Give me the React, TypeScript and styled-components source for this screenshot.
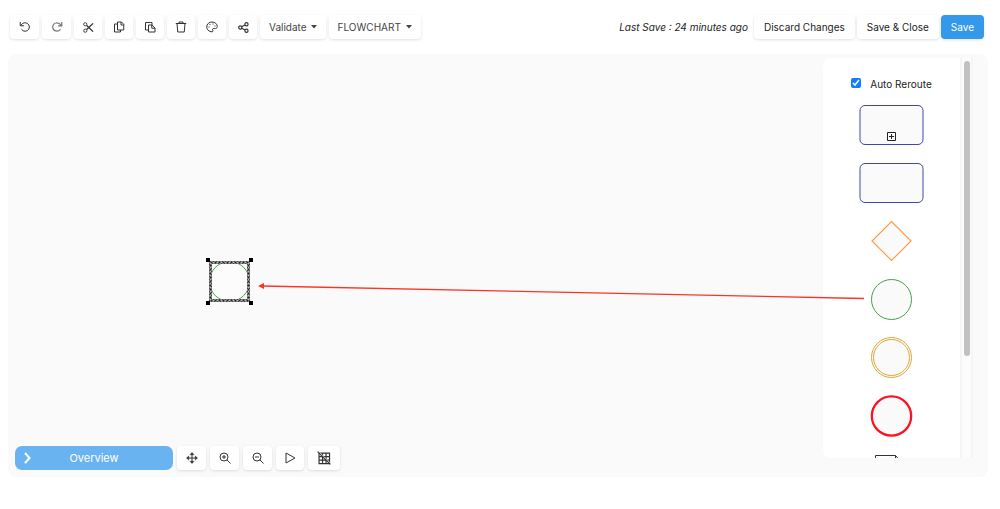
import React from "react";
import styled, { createGlobalStyle } from "styled-components";

const GlobalStyle = createGlobalStyle`
  * { box-sizing: border-box; }
  body {
    margin: 0;
    background: #fff;
    color: #222;
    font-family: Inter, "Liberation Sans", sans-serif;
    font-size: 10px;
    line-height: 16px;
  }
  svg { display: block; }
`;

const Page = styled.div`
  padding: 0 12px 32px 8px;
`;

const Header = styled.header`
  display: flex;
  align-items: center;
  justify-content: space-between;
  padding: 15px 4px 15px 2px;
`;

const Group = styled.div<{ $gap?: number }>`
  display: flex;
  align-items: center;
  gap: ${(p) => p.$gap ?? 3}px;
`;

const Button = styled.button<{ $primary?: boolean }>`
  display: flex;
  align-items: center;
  gap: 4px;
  height: 24px;
  padding: 0 10px;
  border: 0;
  border-radius: 4px;
  background: ${(p) => (p.$primary ? "#3498eb" : "#fff")};
  color: ${(p) => (p.$primary ? "#fff" : "#222")};
  box-shadow: 0 1px 3px rgba(0, 0, 0, 0.12);
  font: inherit;
  white-space: nowrap;
`;

const MenuButton = styled(Button)<{ $gap?: number }>`
  color: #444;
  padding: 0 9px;
  gap: ${(p) => p.$gap ?? 4}px;
`;

const IconButton = styled(Button)<{ $width?: number; $muted?: boolean }>`
  justify-content: center;
  width: ${(p) => p.$width ?? 28}px;
  padding: 0;
  color: ${(p) => (p.$muted ? "#777" : "#333")};
`;

const LastSave = styled.span`
  margin-right: 4px;
  font-style: italic;
`;

const Canvas = styled.main`
  position: relative;
  display: flex;
  justify-content: space-between;
  padding: 4px 15px 7px 7px;
  border-radius: 8px;
  background: #fafafa;
`;

const CanvasTools = styled(Group)`
  align-self: flex-end;
`;

const OverviewButton = styled.button`
  display: grid;
  grid-template-columns: 12px 1fr 12px;
  align-items: center;
  width: 158px;
  height: 24px;
  padding: 0 6px;
  border: 0;
  border-radius: 7px;
  background: #69b3f1;
  color: #fff;
  font: inherit;
  font-size: 11px;
`;

const Panel = styled.aside`
  display: flex;
  height: 400px;
  margin-bottom: 12px;
  border-radius: 8px 0 0 8px;
  overflow: hidden;
  background: #fff;
`;

const Shapes = styled.div`
  display: flex;
  flex-direction: column;
  align-items: center;
  gap: 18px;
  width: 137px;
  padding-top: 19px;
  & > * { flex-shrink: 0; }
`;

const Reroute = styled.label`
  display: flex;
  align-items: center;
  gap: 9px;
  height: 10px;
  padding-top: 4px;
`;

const Checkbox = styled.input`
  width: 10px;
  height: 10px;
  margin: 0 0 3px;
  accent-color: #147aff;
`;

const Track = styled.div`
  width: 13px;
  padding: 3px 0 0 2px;
  border: solid #f5f5f5;
  border-width: 0 2px;
  background: #fcfcfc;
`;

const Thumb = styled.div`
  width: 6px;
  height: 295px;
  border-radius: 3px;
  background: #c1c1c1;
`;

const Node = styled.svg`
  position: absolute;
  left: 198px;
  top: 204px;
`;

const ConnectorLayer = styled.div`
  position: absolute;
  left: 250px;
  right: 124px;
  top: 226px;
  height: 24px;
  pointer-events: none;
`;

type IconProps = { children: React.ReactNode; size?: number; stroke?: number };
const Icon = ({ children, size = 12, stroke = 2 }: IconProps) => (
  <svg width={size} height={size} viewBox="0 0 24 24" fill="none" stroke="currentColor" strokeWidth={stroke} aria-hidden="true">
    {children}
  </svg>
);

const Caret = () => (
  <svg width="6" height="4" viewBox="0 0 6 4" fill="currentColor" aria-hidden="true">
    <path d="M0 0h6L3 3.5z" />
  </svg>
);

const editTools = [
  { label: "Undo", width: 29, icon: <path d="M2.500 2v7.500H10M3.500 9C6 5 9 3.500 12.500 3.500a8.500 8.500 0 1 1-7.500 13" /> },
  { label: "Redo", width: 29, muted: true, icon: <path d="M21.500 2v7.500H14M20.500 9C18 5 15 3.500 11.500 3.500a8.500 8.500 0 1 0 7.500 13" strokeWidth="2.500" /> },
  { label: "Cut", size: 11, icon: <><circle cx="5" cy="5" r="3.500" /><circle cx="5" cy="19" r="3.500" /><path d="M8 7.500 22 21M8 16.500 22 3" strokeWidth="3" /></> },
  { label: "Copy", icon: <><path d="M9 2h8l4.500 4.500V18H9z" /><path d="M9 6H3v16h12v-4M16 2v6h5" /></> },
  { label: "Paste", icon: <><path d="M9 8h7l6 6v8H9z" /><path d="M9 18H3V3h4M13 3h3v5M6.500 3h7" /><path d="M15.500 8v6.500H22" /></> },
  { label: "Delete", icon: <path d="M1.500 5h21M4 5l1.500 17h13L20 5M8 5V2h8v3" /> },
  { label: "Theme", icon: <><path d="M10 21.500C4 20 1.500 16 1.500 12 1.500 6 6 2 12 2s10.500 4 10.500 9c0 4-3 4.500-6 4-3-.5-4 1-3 3s0 4.500-3.500 3.500z" /><path d="M5 12h2M7 7h2M13 6h2M17 10h2" /></> },
  { label: "Share", size: 11, icon: <g strokeWidth="2.500"><circle cx="5" cy="12" r="3.500" /><circle cx="18.500" cy="5" r="3.500" /><circle cx="18.500" cy="19" r="3.500" /><path d="m8 10.500 7.500-4M8 13.500l7.500 4" /></g> },
];

const viewTools = [
  { label: "Move", width: 29, icon: <><path d="M12 3v18M3 12h18" /><path d="m8 5.500 4-4.500 4 4.500zM8 18.500l4 4.500 4-4.500zM5.500 8 1 12l4.500 4zM18.500 8l4.500 4-4.500 4z" fill="currentColor" strokeWidth="1" /></> },
  { label: "Zoom in", width: 29, icon: <><circle cx="10" cy="10" r="8" /><path d="m16 16 7 7M6 10h8M10 6v8" /></> },
  { label: "Zoom out", width: 29, icon: <><circle cx="10" cy="10" r="8" /><path d="m16 16 7 7M6 10h8" /></> },
  { label: "Run", icon: <path d="M4 2v20l18-10z" strokeLinejoin="round" /> },
  { label: "Hide grid", width: 32, size: 14, icon: <><path d="M3.500 3.500h18v18h-18zM9.500 3v19M15.500 3v19M3 9.500h19M3 15.500h19" /><path d="M2.500.5 24 22" stroke="#fff" strokeWidth="1.500" /><path d="m1 1 22 22" /></> },
];

export default function App() {
  return (
    <>
      <GlobalStyle />
      <Page>
        <Header>
          <Group>
            {editTools.map((t) => (
              <IconButton key={t.label} aria-label={t.label} $width={t.width} $muted={t.muted}>
                <Icon size={t.size}>{t.icon}</Icon>
              </IconButton>
            ))}
            <MenuButton>Validate <Caret /></MenuButton>
            <MenuButton $gap={5}>FLOWCHART <Caret /></MenuButton>
          </Group>
          <Group $gap={2}>
            <LastSave>Last Save : 24 minutes ago</LastSave>
            <Button>Discard Changes</Button>
            <Button>Save &amp; Close</Button>
            <Button $primary>Save</Button>
          </Group>
        </Header>
        <Canvas>
          <CanvasTools $gap={4}>
            <OverviewButton>
              <Icon stroke={4}><path d="m8 2 9 10-9 10" /></Icon>
              <span>Overview</span>
            </OverviewButton>
            {viewTools.map((t) => (
              <IconButton key={t.label} aria-label={t.label} $width={t.width}>
                <Icon size={t.size}>{t.icon}</Icon>
              </IconButton>
            ))}
          </CanvasTools>

          <Node width="48" height="48" viewBox="0 0 48 48" fill="none" aria-label="Start event">
            <circle cx="23.500" cy="23.500" r="20" fill="#fcfcfc" stroke="#43a047" />
            <rect x="4.500" y="4.500" width="38" height="38" stroke="#bbb" strokeWidth="3" />
            <rect x="4.500" y="4.500" width="38" height="38" stroke="#222" strokeDasharray="2 2" />
            <rect x="3.500" y="3.500" width="40" height="40" stroke="#444" strokeDasharray="2 1" />
            <rect x="5.500" y="5.500" width="36" height="36" stroke="#444" strokeDasharray="2 1" />
            <path fill="#000" d="M0 0h4v4H0zM43 0h4v4h-4zM0 43h4v4H0zM43 43h4v4h-4z" />
          </Node>

          <Panel aria-label="Shapes">
            <Shapes>
              <Reroute>
                <Checkbox type="checkbox" defaultChecked />
                Auto Reroute
              </Reroute>
              <svg width="65" height="40" viewBox="0 0 65 40" fill="none">
                <rect x="1" y=".5" width="63" height="39" rx="5" fill="#fafafa" stroke="#3f46ad" />
                <path d="M28.500 27.500h8v8h-8zM30 31.500h5M32.500 29v5" stroke="#222" />
              </svg>
              <svg width="65" height="40" viewBox="0 0 65 40">
                <rect x="1" y=".5" width="63" height="39" rx="5" fill="#fafafa" stroke="#3f46ad" />
              </svg>
              <svg width="41" height="40" viewBox="0 0 41 40" overflow="visible">
                <path d="M20.500 .5 40 20 20.500 39.500 1 20z" fill="#fafafa" stroke="#fb9d4b" strokeWidth="1.200" />
              </svg>
              <svg width="41" height="40" viewBox="0 0 41 40" overflow="visible">
                <circle cx="20.500" cy="20.500" r="20" fill="#fafafa" stroke="#43a047" />
              </svg>
              <svg width="41" height="40" viewBox="0 0 41 40" overflow="visible">
                <circle cx="20.500" cy="20.500" r="20" fill="#fafafa" stroke="#dca93c" />
                <circle cx="20.500" cy="20.500" r="18" fill="none" stroke="#dca93c" />
              </svg>
              <svg width="43" height="42" viewBox="0 0 43 42">
                <circle cx="21.500" cy="21" r="19.700" fill="#fafafa" stroke="#fc1322" strokeWidth="2.300" />
              </svg>
              <svg width="33" height="40" viewBox="0 0 33 40" fill="none" stroke="#333">
                <path d="M.5 40V.5h20v8h7v31M20.500 .5l7 8" />
              </svg>
            </Shapes>
            <Track><Thumb /></Track>
          </Panel>

          <ConnectorLayer>
            <svg width="100%" height="24" overflow="visible" aria-hidden="true">
              <svg width="100%" height="24" preserveAspectRatio="none" viewBox="0 0 606 24">
                <path d="M4 6 606 18.500" stroke="#fb3426" strokeWidth="1.300" fill="none" vectorEffect="non-scaling-stroke" />
              </svg>
              <path d="m0 6 6-3v6z" fill="#fb3426" />
            </svg>
          </ConnectorLayer>
        </Canvas>
      </Page>
    </>
  );
}
